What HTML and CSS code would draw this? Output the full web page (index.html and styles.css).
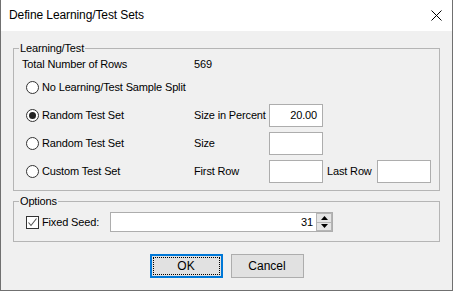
FILE: index.html
```html
<!DOCTYPE html>
<html>
<head>
<meta charset="utf-8">
<link rel="stylesheet" href="styles.css">
</head>
<body>
<div class="window">
  <div class="titlebar">
    <span class="title">Define Learning/Test Sets</span>
    <svg class="close" width="11" height="11" viewBox="0 0 11 11"><path d="M0.5 0.5 L10.5 10.5 M10.5 0.5 L0.5 10.5" stroke="#000" stroke-width="1" fill="none"/></svg>
  </div>
  <div class="content">
    <div class="group group-lt">
      <span class="legend">Learning/Test</span>
      <div class="lt-grid">
        <span class="total-label">Total Number of Rows</span>
        <span class="c2">569</span>

        <label class="radio-row"><span class="radio"></span>No Learning/Test Sample Split</label>

        <label class="radio-row"><span class="radio checked"></span>Random Test Set</label>
        <span class="c2">Size in Percent</span>
        <span class="edit c3 right">20.00</span>

        <label class="radio-row"><span class="radio"></span>Random Test Set</label>
        <span class="c2">Size</span>
        <span class="edit c3"></span>

        <label class="radio-row"><span class="radio"></span>Custom Test Set</label>
        <span class="c2">First Row</span>
        <span class="edit c3"></span>
        <span class="c4">Last Row</span>
        <span class="edit c5"></span>
      </div>
    </div>
    <div class="group group-opt">
      <span class="legend">Options</span>
      <div class="opt-row">
        <label class="check-row"><span class="checkbox"><svg width="11" height="11" viewBox="0 0 11 11"><path d="M1.5 5.5 L4 8.5 L9.5 1.5" stroke="#555" stroke-width="1.1" fill="none"/></svg></span>Fixed Seed:</label>
        <div class="spin">
          <span class="spin-text">31</span>
          <div class="spin-btns">
            <span class="spin-btn"><svg width="7" height="4" viewBox="0 0 7 4"><path d="M0 4 L3.5 0 L7 4 Z" fill="#000"/></svg></span>
            <span class="spin-btn"><svg width="7" height="4" viewBox="0 0 7 4"><path d="M0 0 L3.5 4 L7 0 Z" fill="#000"/></svg></span>
          </div>
        </div>
      </div>
    </div>
    <div class="buttons">
      <button class="btn btn-default"><span class="focus">OK</span></button>
      <button class="btn">Cancel</button>
    </div>
  </div>
</div>
</body>
</html>
```
FILE: styles.css
```css
* { box-sizing: border-box; }
html, body { margin: 0; padding: 0; }
body {
  font-family: "Liberation Sans", Arial, sans-serif;
  font-size: 11px;
  letter-spacing: -0.15px;
  color: #000;
  background: #f0f0f0;
}
.window {
  width: 453px;
  height: 291px;
  border: 1px solid #707070;
  border-top: none;
  background: #f0f0f0;
  display: flex;
  flex-direction: column;
}
.titlebar {
  height: 31px;
  background: #fff;
  display: flex;
  align-items: center;
  justify-content: space-between;
  padding: 0 10px 1px 8px;
}
.title {
  font-family: "Liberation Sans", Arial, sans-serif;
  font-size: 12px;
  letter-spacing: -0.1px;
}
.close { display: block; }
.content {
  padding: 17px 12px 0 12px;
  display: flex;
  flex-direction: column;
}
.group {
  position: relative;
  border: 1px solid #b5b5b5;
}
.legend {
  position: absolute;
  top: -8px;
  left: 5px;
  padding: 0 1px;
  background: #f0f0f0;
  line-height: 14px;
}
.group-lt {
  height: 143px;
  padding: 6px 0 0 0;
}
.lt-grid {
  display: grid;
  grid-template-columns: 180px 75px 58px 50px 54px;
  grid-template-rows: 18px repeat(4, 28px);
  align-items: center;
}
.total-label { grid-column: 1; padding-left: 8px; }
.c2 { grid-column: 2; }
.c3 { grid-column: 3; }
.c4 { grid-column: 4; }
.c5 { grid-column: 5; }
.radio-row {
  grid-column: 1;
  display: flex;
  align-items: center;
  padding-left: 12px;
}
.radio {
  width: 13px;
  height: 13px;
  border: 1px solid #333;
  border-radius: 50%;
  background: #fff;
  margin-right: 3px;
  display: flex;
  align-items: center;
  justify-content: center;
}
.radio.checked::after {
  content: "";
  width: 7px;
  height: 7px;
  border-radius: 50%;
  background: #222;
}
.edit {
  width: 54px;
  height: 23px;
  border: 1px solid #adadad;
  background: #fff;
  display: flex;
  align-items: center;
  padding: 0 5px;
}
.edit.right { justify-content: flex-end; }
.group-opt {
  margin-top: 10px;
  height: 41px;
  display: flex;
  align-items: center;
  padding: 1px 0 0 12px;
}
.opt-row {
  display: flex;
  align-items: center;
}
.check-row {
  display: flex;
  align-items: center;
  width: 84px;
}
.checkbox {
  width: 13px;
  height: 13px;
  border: 1px solid #333;
  background: #fff;
  margin-right: 3px;
  display: flex;
  align-items: center;
  justify-content: center;
}
.checkbox svg { display: block; }
.spin {
  width: 223px;
  height: 20px;
  border: 1px solid #adadad;
  background: #fff;
  display: flex;
}
.spin-text {
  flex: 1;
  text-align: right;
  padding-right: 3px;
  line-height: 18px;
}
.spin-btns {
  width: 16px;
  display: flex;
  flex-direction: column;
}
.spin-btn {
  flex: 1;
  background: #e5e5e5;
  border: 1px solid #b5b5b5;
  display: flex;
  align-items: center;
  justify-content: center;
}
.spin-btn + .spin-btn { border-top: none; }
.spin-btn svg { display: block; }
.buttons {
  margin-top: 12px;
  display: flex;
  justify-content: center;
  gap: 8px;
}
.btn {
  width: 73px;
  height: 24px;
  font: inherit;
  font-size: 12px;
  color: #000;
  background: #e1e1e1;
  border: 1px solid #adadad;
  padding: 0;
}
.btn-default {
  border: 2px solid #0078d7;
  padding: 1px;
}
.focus {
  display: flex;
  align-items: center;
  justify-content: center;
  width: 100%;
  height: 100%;
  border: 1px dotted #000;
}
```
